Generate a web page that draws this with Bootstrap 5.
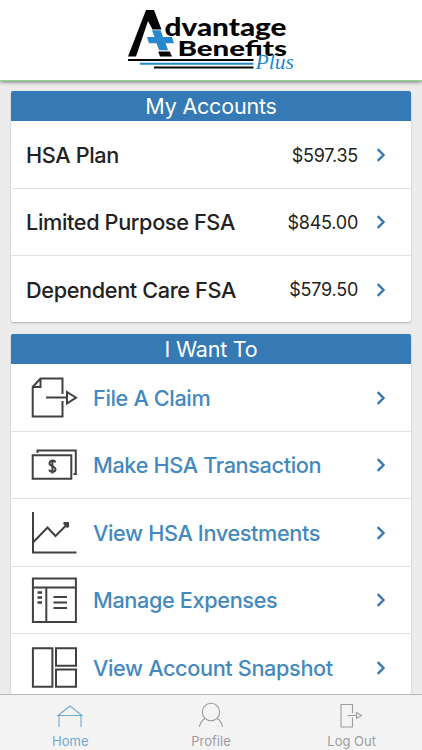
<!DOCTYPE html>
<html lang="en">
<head>
<meta charset="utf-8">
<meta name="viewport" content="width=device-width, initial-scale=1">
<title>Advantage Benefits Plus</title>
<link rel="stylesheet" href="https://cdn.jsdelivr.net/npm/bootstrap@5.3.0/dist/css/bootstrap.min.css">
<style>
body{font-family:Inter,"Liberation Sans",sans-serif;background:#ececec;color:#222;height:100vh;overflow:hidden}
.brand-bar{height:81px;background:#fff;border-bottom:1px solid #8bd98b;box-shadow:0 1px 4px rgba(0,0,0,.5);z-index:2}
.panel{border:0;border-radius:2px;box-shadow:0 1px 2px rgba(0,0,0,.25);overflow:hidden}
.panel-title{height:30px;line-height:30px;background:#3579b5;color:#fff;font-size:21.5px;font-weight:400;letter-spacing:-.2px}
.panel .list-group-item{height:67.4px;padding:1px 25px 0 15px;border-color:#e1e1e1;color:#222;background:#fff}
.accounts .list-group-item:last-child{height:66.2px}
.name{font-size:21.700px;font-weight:500;line-height:30px;letter-spacing:-.37px;white-space:nowrap}
.amount{font-size:18px;letter-spacing:-.25px;margin-right:18px}
.action{color:#4489bd;margin-left:15px}
.chev{width:10px;height:14px;fill:none;stroke:#3579b5;stroke-width:2.4}
.glyph{width:48px;height:48px;fill:none;stroke:#414141;stroke-width:2;margin-left:4px}
.content-area{padding:10.400px 11px 0;min-height:0}
.panel+.panel{margin-top:12px}
.tabs{height:56px;background:#f4f4f4;border-top:1px solid #b5b5b5;z-index:3}
.tabs .nav-link{color:#9c9c9c;font-size:13px;line-height:16px;padding:6px 0 0}
.tabs .nav-link.active{color:#70a9d0}
.tabs svg{width:30px;height:30px;fill:none;stroke:currentColor;stroke-width:1.1}
.tab-label{padding-top:2px}
</style>
<script src="https://cdn.jsdelivr.net/npm/bootstrap@5.3.0/dist/js/bootstrap.bundle.min.js"></script>
</head>
<body class="d-flex flex-column">
<svg class="d-none"><symbol id="chev" viewBox="0 0 10 14"><path d="M1.7 1.2 7.5 7l-5.800 5.800"/></symbol></svg>
<header class="brand-bar position-relative flex-shrink-0 d-flex justify-content-center">
<svg width="180" height="80" viewBox="121 0 180 80" role="img" aria-label="Advantage Benefits Plus">
<path fill="#050505" d="M146 10h8l7.500 19.500h-9L148 21l-12 35.500h-8z"/>
<path fill="#050505" d="M158.300 51.500h11.500l2.200 5h-12z"/>
<path fill="#2589cb" d="M152 30.300h8.500l2.500 6.700h9l2 6.300h-8.500l2.700 7h-9l-2.700-7h-7.500l-2-6.300h7.500z"/>
<g fill="#050505" font-family="Lato,sans-serif" font-weight="900">
<text x="164.500" y="35.500" font-size="25.500" textLength="122" lengthAdjust="spacingAndGlyphs">dvantage</text>
<text x="177.500" y="56.300" font-size="21.500" textLength="109.500" lengthAdjust="spacingAndGlyphs">Benefits</text></g>
<path stroke="#050505" stroke-width="2" d="M128 60h125.500M154 67.500h99.500"/>
<path stroke="#2589cb" stroke-width="2" d="M140 63.800h113.500"/>
<text x="255.500" y="69" fill="#2589cb" font-family="Liberation Serif,serif" font-style="italic" font-size="21.500" textLength="38.500" lengthAdjust="spacingAndGlyphs">Plus</text>
</svg>
</header>
<main class="content-area flex-grow-1 overflow-hidden">
<section class="card panel accounts">
<h1 class="panel-title text-center m-0">My Accounts</h1>
<div class="list-group list-group-flush">
<a class="list-group-item d-flex align-items-center"><span class="name me-auto">HSA Plan</span><span class="amount">$597.35</span><svg class="chev"><use href="#chev"/></svg></a>
<a class="list-group-item d-flex align-items-center"><span class="name me-auto">Limited Purpose FSA</span><span class="amount">$845.00</span><svg class="chev"><use href="#chev"/></svg></a>
<a class="list-group-item d-flex align-items-center"><span class="name me-auto">Dependent Care FSA</span><span class="amount">$579.50</span><svg class="chev"><use href="#chev"/></svg></a>
</div>
</section>
<section class="card panel">
<h1 class="panel-title text-center m-0">I Want To</h1>
<div class="list-group list-group-flush">
<a class="list-group-item d-flex align-items-center"><svg class="glyph flex-shrink-0" viewBox="0 0 48 48"><path d="M32.500 20V4.500h-22L2.700 13v29.500h29.800V27M10.500 4.500V13H2.700M16 23.500h21M37 18v11.500l9-5.800z"/></svg><span class="name action me-auto">File A Claim</span><svg class="chev"><use href="#chev"/></svg></a>
<a class="list-group-item d-flex align-items-center"><svg class="glyph flex-shrink-0" viewBox="0 0 48 48"><path d="M2.700 14.200h38.600v23.500H2.700zM7.500 12V9.500h38.300V33H43.500M25.300 21.500c-.5-2.700-5.800-2.500-5.800.8 0 3.500 6 2.500 6 6 0 3-5.700 3.500-6.200.3M22.400 18.500v14"/></svg><span class="name action me-auto">Make HSA Transaction</span><svg class="chev"><use href="#chev"/></svg></a>
<a class="list-group-item d-flex align-items-center"><svg class="glyph flex-shrink-0" viewBox="0 0 48 48"><path d="M3 3v40.500h43.500M3 33.500l14.500-15 8 8.500L36 16.500"/><path fill="#414141" stroke="none" d="M33 14.500l1-1.500h5v5l-2 1z"/></svg><span class="name action me-auto">View HSA Investments</span><svg class="chev"><use href="#chev"/></svg></a>
<a class="list-group-item d-flex align-items-center"><svg class="glyph flex-shrink-0" viewBox="0 0 48 48"><path d="M2.900 2.500h43v43.500h-43zM2.900 11.500h43M16.300 11.500V46M23.500 21h13.500M23.500 26.500h13.500M23.500 32h13.500"/><path stroke-width="2.400" d="M7.500 16.500h4.500M7.500 21.500h4.500M7.500 26.500h4.500"/></svg><span class="name action me-auto">Manage Expenses</span><svg class="chev"><use href="#chev"/></svg></a>
<a class="list-group-item d-flex align-items-center"><svg class="glyph flex-shrink-0" viewBox="0 0 48 48"><path d="M2.900 4.300h19.500v38.500H2.900zM26 4.300h20v17.500H26zM26 25.600h20v17.200H26z"/></svg><span class="name action me-auto">View Account Snapshot</span><svg class="chev"><use href="#chev"/></svg></a>
</div>
</section>
</main>
<nav class="tabs nav nav-fill flex-nowrap flex-shrink-0">
<a class="nav-link active w-100 d-flex flex-column align-items-center"><svg viewBox="0 0 30 30"><path d="M3 14.500 15 5l12 9.500zM4 14.500V26M26 14.500V26"/></svg><span class="tab-label">Home</span></a>
<a class="nav-link w-100 d-flex flex-column align-items-center"><svg viewBox="0 0 30 30"><circle cx="15" cy="11" r="8.700"/><path d="M9 17.500C5.500 19.500 4 22.500 3.500 26M21 17.500c3.500 2 5 5 5.500 8.500"/></svg><span class="tab-label">Profile</span></a>
<a class="nav-link w-100 d-flex flex-column align-items-center"><svg viewBox="0 0 30 30"><path d="M15.500 12V3.500H4V26h11.500v-9.500M10.500 14.500h9M19.500 11.500v6l5-3z"/></svg><span class="tab-label">Log Out</span></a>
</nav>
</body>
</html>
